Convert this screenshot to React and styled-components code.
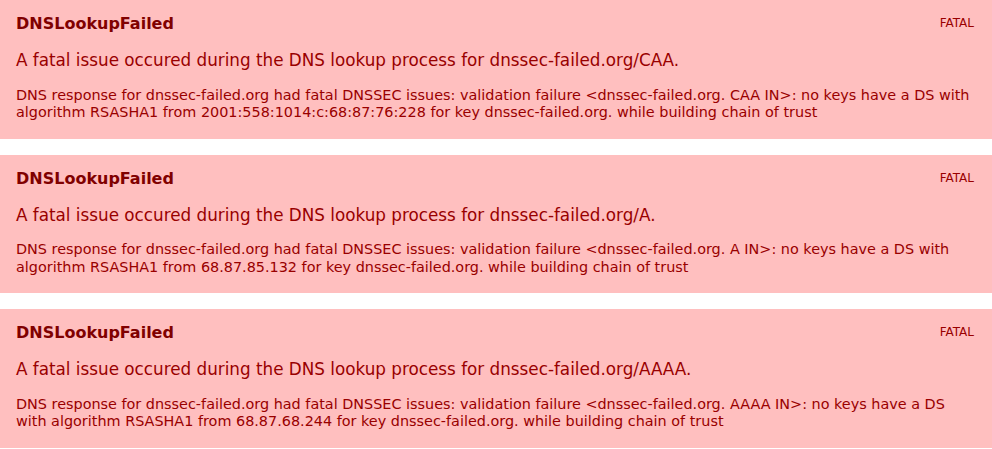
import React from "react";
import styled, { createGlobalStyle } from "styled-components";

const Global = createGlobalStyle`
  html, body { margin: 0; padding: 0; background: #ffffff; }
  body { font-family: "DejaVu Sans", Verdana, sans-serif; }
`;

const List = styled.div`
  display: flex;
  flex-direction: column;
  gap: 16px;
`;

const Card = styled.section`
  background: #ffbfbf;
  color: #990000;
  padding: 15px 16px 16px 16px;
  height: 138.5px;
  box-sizing: border-box;
  display: flex;
  flex-direction: column;
`;

const Header = styled.div`
  display: flex;
  justify-content: space-between;
  align-items: flex-start;
`;

const Title = styled.h3`
  margin: 0;
  font-size: 16px;
  line-height: 18.6px;
  font-weight: bold;
  color: #800000;
`;

const Severity = styled.span`
  font-size: 12px;
  line-height: 14px;
  margin: 1.2px 2px 0 0;
  color: #990000;
`;

const Message = styled.p`
  margin: 16.6px 0 0;
  font-size: 16.8px;
  line-height: 20px;
`;

const Detail = styled.p`
  margin: 16.7px 0 0;
  font-size: 14.4px;
  line-height: 17.6px;
`;

const items = [
  { rec: "CAA", ip: "2001:558:1014:c:68:87:76:228" },
  { rec: "A", ip: "68.87.85.132" },
  { rec: "AAAA", ip: "68.87.68.244" },
];

export default function App() {
  return (
    <>
      <Global />
      <List>
        {items.map((it) => (
          <Card key={it.rec}>
            <Header>
              <Title>DNSLookupFailed</Title>
              <Severity>FATAL</Severity>
            </Header>
            <Message>
              A fatal issue occured during the DNS lookup process for dnssec-failed.org/{it.rec}.
            </Message>
            <Detail>
              DNS response for dnssec-failed.org had fatal DNSSEC issues: validation failure
              &lt;dnssec-failed.org. {it.rec} IN&gt;: no keys have a DS with algorithm RSASHA1 from{" "}
              {it.ip} for key dnssec-failed.org. while building chain of trust
            </Detail>
          </Card>
        ))}
      </List>
    </>
  );
}
